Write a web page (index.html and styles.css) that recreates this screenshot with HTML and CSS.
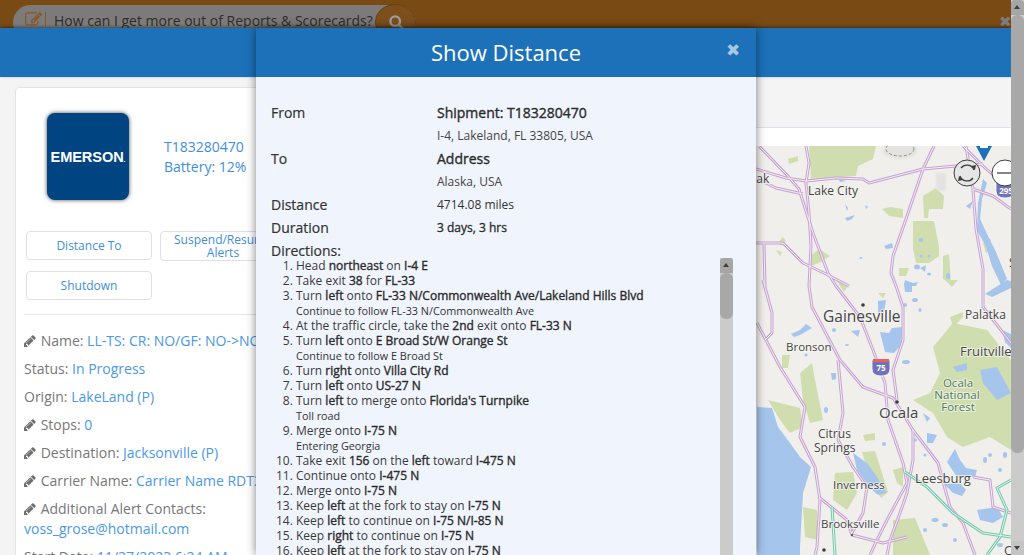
FILE: index.html
```html
<!DOCTYPE html>
<html lang="en">
<head>
<meta charset="utf-8">
<title>Show Distance</title>
<link rel="stylesheet" href="styles.css">
</head>
<body>
<svg class="sprite" width="0" height="0" aria-hidden="true">
  <symbol id="pencil" viewBox="0 0 1792 1792"><path d="M491 1536l91-91-235-235-91 91v107h128v128h107zm372-928q0-22-22-22-10 0-17 7l-542 542q-7 7-7 17 0 22 22 22 10 0 17-7l542-542q7-7 7-17zm-54-192l416 416-832 832h-416v-416zm683 96q0 53-37 90l-166 166-416-416 166-165q36-38 90-38 53 0 91 38l235 234q37 39 37 91z"/></symbol>
</svg>
<div class="window">
  <div class="page">
    <div class="topbar">
      <div class="search">
        <svg class="search-edit" viewBox="0 0 1792 1792"><path d="M888 1184l116-116-152-152-116 116v56h96v96h56zm440-720q-16-16-33 1l-350 350q-17 17-1 33t33-1l350-350q17-17 1-33zm80 594v190q0 119-84.5 203.5t-203.5 84.5h-832q-119 0-203.5-84.5t-84.5-203.5v-832q0-119 84.5-203.5t203.5-84.5h832q63 0 117 25 15 7 18 23 3 17-9 29l-49 49q-14 14-32 8-23-6-45-6h-832q-66 0-113 47t-47 113v832q0 66 47 113t113 47h832q66 0 113-47t47-113v-126q0-13 9-22l64-64q15-15 35-7t20 29zm-96-738l288 288-672 672h-288v-288zm444 132l-92 92-288-288 92-92q28-28 68-28t68 28l152 152q28 28 28 68t-28 68z"/></svg>
        <span class="search-sep"></span>
        <span class="search-text">How can I get more out of Reports &amp; Scorecards?</span>
        <span class="search-btn">
          <svg viewBox="0 0 20 20"><circle cx="9" cy="9" r="6" /><path d="M13.5 13.5 L19 19"/></svg>
        </span>
      </div>
      <span class="top-close">✖</span>
    </div>
    <div class="header"></div>
    <div class="content">
      <section class="card">
        <div class="identity">
          <div class="logo"><span>EMERSON<small>.</small></span></div>
          <div class="identity-text">
            <div>T183280470</div>
            <div>Battery: 12%</div>
          </div>
        </div>
        <div class="actions">
          <a class="action">Distance To</a>
          <a class="action action-tall">Suspend/Resume Alerts</a>
          <a class="action">Shutdown</a>
        </div>
        <hr class="rule">
        <div class="field"><svg class="pen"><use href="#pencil"/></svg> Name: <a>LL-TS: CR: NO/GF: NO-&gt;NO</a></div>
        <div class="field">Status: <a>In Progress</a></div>
        <div class="field">Origin: <a>LakeLand (P)</a></div>
        <div class="field"><svg class="pen"><use href="#pencil"/></svg> Stops: <a>0</a></div>
        <div class="field"><svg class="pen"><use href="#pencil"/></svg> Destination: <a>Jacksonville (P)</a></div>
        <div class="field"><svg class="pen"><use href="#pencil"/></svg> Carrier Name: <a>Carrier Name RDT3</a></div>
        <div class="field field-double"><svg class="pen"><use href="#pencil"/></svg> Additional Alert Contacts:<br><a>voss_grose@hotmail.com</a></div>
        <div class="field">Start Date: <a>11/27/2023 6:24 AM</a></div>
      </section>
      <section class="panel">
        <svg class="map" viewBox="756 146 255 409" xmlns="http://www.w3.org/2000/svg">
          <defs>
            <g id="roads">
              <path d="M756 169L786 178L806 181L836 178L863 179L869 183L896 176L923 169L956 166L983 164"/>
              <path d="M759 146L786 174L799 189L813 233L828 273L836 286L860 317L873 350L885 383L888 420L903 463L907 483L887 520L877 540L870 555"/>
              <path d="M806 146L809 163L806 183L809 213L811 246L809 286L812 307L840 360L863 387L893 398L913 430L938 463L950 507L963 523L975 555"/>
              <path d="M934 146L923 169L906 219L893 256L891 273L896 286L903 307L903 340L893 370L897 400"/>
              <path d="M757 323L780 367L805 407L800 437L815 467L820 500L817 547L815 555"/>
              <path d="M763 280L772 313L772 333L765 340"/>
              <path d="M756 243L783 243L803 263L826 274L849 286"/>
              <path d="M764 243L765 286"/>
              <path d="M756 178L776 188L803 194"/>
              <path d="M966 146L973 189L976 229L983 269L983 307L1011 343"/>
              <path d="M973 189L993 196L1011 209"/>
              <path d="M963 146L983 166L1011 191"/>
              <path d="M838 360L843 413L838 440L853 467L867 487L863 513L852 533"/>
              <path d="M913 430L913 460L907 493L900 513L890 540L887 555"/>
              <path d="M820 498L847 520L852 535L883 543L907 537"/>
              <path d="M973 477L990 480L993 507L1011 513"/>
            </g>
            <g id="tolls">
              <path d="M905 472L927 487L953 513L983 533L1011 537"/>
              <path d="M1011 480L997 488L1007 510L1000 537L987 555"/>
              <path d="M832 507L835 555"/>
            </g>
          </defs>
          <rect class="land" x="756" y="146" width="255" height="409"/>
          <g class="green">
            <polygon points="809,146 876,146 873,159 858,166 856,176 811,179"/>
            <polygon points="882,209 890,207 903,209 903,218 889,216"/>
            <polygon points="923,196 936,188 944,196 943,209 929,209 928,218 924,218"/>
            <polygon points="913,221 934,221 939,246 939,256 929,263 916,263 913,249"/>
            <polygon points="943,256 949,254 951,283 943,279"/>
            <polygon points="899,268 909,268 906,276 899,276"/>
            <polygon points="788,159 798,156 798,161 789,164"/>
            <polygon points="812,255 819,249 830,256 819,263 811,266"/>
            <polygon points="983,243 991,239 991,249 986,253"/>
            <polygon points="933,347 953,323 987,330 1011,360 1011,450 990,437 963,447 947,437 933,413 913,400 930,393 940,373"/>
            <polygon points="800,373 812,363 815,380 823,420 810,423 803,400"/>
            <polygon points="768,400 800,408 803,427 790,433 780,420"/>
            <polygon points="835,473 853,472 857,493 847,510 833,500"/>
            <polygon points="803,507 817,510 818,540 805,537"/>
            <polygon points="893,470 903,467 903,487 897,483"/>
            <polygon points="862,452 875,451 888,492 881,498 870,478"/>
            <polygon points="863,435 875,433 875,440 865,441"/>
            <polygon points="782,355 790,355 788,368 782,368"/>
            <polygon points="893,520 915,518 930,555 893,555"/>
            <polygon points="950,317 963,312 963,317 953,327"/>
            <polygon points="945,280 958,280 952,287"/>
            <polygon points="836,280 848,286 844,292"/>
            <polygon points="878,293 886,293 883,298"/>
            <polygon points="778,243 783,237 786,241 781,246"/>
            <polygon points="776,250 782,252 780,256"/>
          </g>
          <g class="haze">
            <ellipse cx="900" cy="151" rx="17" ry="8"/>
            <rect x="936" y="173" width="10" height="18" rx="3"/>
          </g>
          <ellipse class="dashes" cx="900" cy="149" rx="14" ry="7"/>
          <g class="water">
            <polygon points="757,407 772,408 778,427 790,443 800,457 811,467 803,493 800,547 800,555 757,555"/>
            <polygon points="983,179 987,183 982,199 980,219 988,236 996,252 1007,279 1001,285 992,266 986,247 977,230 978,203"/>
            <polygon points="985,294 1007,280 1011,281 1011,288 992,297"/>
            <polygon points="1002,330 1011,334 1011,348 1005,342"/>
            <polygon points="880,332 889,333 892,328 903,327 901,345 894,353 885,352"/>
            <polygon points="878,301 886,300 884,312 878,313"/>
            <polygon points="904,283 912,283 912,292 905,292"/>
            <polygon points="980,370 997,367 1011,393 997,400 983,383"/>
            <polygon points="953,367 967,363 967,370 957,372"/>
            <polygon points="853,453 860,458 868,464 877,477 887,493 878,495 870,488 857,470"/>
            <polygon points="927,433 937,435 933,443 927,443"/>
            <polygon points="944,484 960,483 966,490 962,496 953,493"/>
            <polygon points="947,462 955,449 960,460 966,468 977,470 975,477 957,477"/>
            <polygon points="977,510 997,507 1003,517 993,523 980,520"/>
            <polygon points="851,331 860,330 858,337"/>
            <polygon points="831,373 836,373 836,379 832,380"/>
            <polygon points="791,334 800,330 806,324 812,328 800,335 794,337"/>
            <polygon points="923,413 930,418 927,422"/>
            <polygon points="845,218 855,215 852,219 847,221"/>
            <polygon points="845,204 848,208 847,211"/>
            <polygon points="865,205 868,207 866,209"/>
            <polygon points="884,246 892,243 893,248 886,249"/>
            <polygon points="966,206 973,201 970,209"/>
            <polygon points="905,280 913,283 918,282 916,286 904,286"/>
            <polygon points="920,268 926,265 925,272"/>
            <polygon points="838,178 846,181 840,182"/>
            <ellipse cx="921" cy="240" rx="2.5" ry="2"/>
            <ellipse cx="921" cy="256" rx="1.5" ry="1.5"/>
            <ellipse cx="929" cy="256" rx="1.5" ry="1.5"/>
            <ellipse cx="917" cy="267" rx="3" ry="2.5"/>
            <ellipse cx="929" cy="274" rx="2" ry="1.5"/>
            <ellipse cx="948" cy="276" rx="2" ry="3"/>
            <ellipse cx="861" cy="258" rx="1.5" ry="1"/>
            <ellipse cx="905" cy="305" rx="2" ry="2"/>
            <ellipse cx="915" cy="300" rx="3" ry="2"/>
            <ellipse cx="920" cy="310" rx="1.5" ry="2"/>
            <ellipse cx="906" cy="362" rx="4" ry="2"/>
            <ellipse cx="834" cy="330" rx="2" ry="2"/>
            <ellipse cx="847" cy="345" rx="2" ry="1"/>
            <ellipse cx="806" cy="355" rx="1.5" ry="1.5"/>
            <ellipse cx="826" cy="410" rx="2" ry="3"/>
            <ellipse cx="884" cy="444" rx="2" ry="2"/>
            <ellipse cx="915" cy="440" rx="2" ry="1.5"/>
            <ellipse cx="925" cy="455" rx="1.5" ry="1.5"/>
            <ellipse cx="935" cy="520" rx="3.5" ry="2"/>
            <ellipse cx="945" cy="525" rx="3" ry="2"/>
            <ellipse cx="925" cy="530" rx="2" ry="2"/>
            <ellipse cx="990" cy="455" rx="2" ry="2"/>
            <ellipse cx="1005" cy="455" rx="2" ry="3"/>
            <ellipse cx="985" cy="460" rx="2" ry="3"/>
            <ellipse cx="1000" cy="470" rx="2" ry="2"/>
            <ellipse cx="1000" cy="545" rx="3" ry="2"/>
            <ellipse cx="955" cy="540" rx="2" ry="2"/>
          </g>
          <g class="road-case"><use href="#roads"/></g>
          <g class="road-core"><use href="#roads"/></g>
          <g class="toll-case"><use href="#tolls"/></g>
          <g class="toll-core"><use href="#tolls"/></g>
          <circle class="dot" cx="863" cy="305" r="1.8"/>
          <circle class="dot" cx="897" cy="402" r="1.8"/>
          <circle class="dot" cx="824" cy="550" r="1.8"/>
          <circle class="dot" cx="852" cy="535" r="1"/>

          <g class="shield">
            <path class="shield-body" d="M872 360H890V369Q890 376 881 376Q872 376 872 369Z"/>
            <rect class="shield-top" x="873" y="359" width="16" height="3"/>
            <text class="shield-text" x="881" y="371">75</text>
            <path class="shield-body" d="M996 182H1014V191Q1014 198 1005 198Q996 198 996 191Z"/>
            <text class="shield-text" x="1006" y="194">295</text>
          </g>

          <text class="lbl" x="747" y="183">Oak</text>
          <text class="lbl" x="808" y="195">Lake City</text>
          <text class="lbl lbl-big" x="823" y="322">Gainesville</text>
          <text class="lbl" x="965" y="319">Palatka</text>
          <text class="lbl lbl-mid" x="960" y="356">Fruitville</text>
          <text class="lbl lbl-sm" x="786" y="351">Bronson</text>
          <text class="lbl lbl-big2" x="879" y="418">Ocala</text>
          <text class="lbl lbl-forest" y="387"><tspan x="958">Ocala</tspan><tspan x="957" dy="12">National</tspan><tspan x="958" dy="12">Forest</tspan></text>
          <text class="lbl" y="438"><tspan x="818">Citrus</tspan><tspan x="814" dy="14">Springs</tspan></text>
          <text class="lbl lbl-sm" x="833" y="489">Inverness</text>
          <text class="lbl lbl-mid" x="915" y="483">Leesburg</text>
          <text class="lbl lbl-sm" x="821" y="528">Brooksville</text>
          <text class="lbl lbl-mid" x="1004" y="555">Orlando</text>
          <text class="lbl" x="1009" y="267">St</text>

          <path class="pin" d="M976 146H992L984 161Z"/>
          <rect class="pin-mark" x="980" y="146" width="8" height="2"/>
          <g class="ctl">
            <circle cx="967" cy="173" r="13"/>
            <path class="ctl-arrow" d="M974 170A7.5 7.5 0 0 0 961 168M960 176A7.5 7.5 0 0 0 973 178"/>
            <path class="ctl-head" d="M971 166L975 170L976 165ZM963 180L959 176L958 181Z"/>
            <circle class="ctl-white" cx="1005" cy="173" r="13"/>
            <path class="ctl-minus" d="M997 173H1011"/>
          </g>
        </svg>
      </section>
    </div>
  </div>
  <div class="scrollbar scrollbar-page">
    <span class="scroll-btn scroll-up"></span>
    <span class="scroll-thumb"></span>
    <span class="scroll-rest"></span>
    <span class="scroll-btn scroll-down"></span>
  </div>

  <div class="modal">
    <div class="modal-head">
      <h1>Show Distance</h1>
      <span class="modal-close">✖</span>
    </div>
    <div class="modal-body">
      <div class="kv kv-main"><span class="k">From</span><span class="v">Shipment: T183280470</span></div>
      <div class="kv kv-sub"><span class="k"></span><span class="v">I-4, Lakeland, FL 33805, USA</span></div>
      <div class="kv kv-main"><span class="k">To</span><span class="v">Address</span></div>
      <div class="kv kv-sub"><span class="k"></span><span class="v">Alaska, USA</span></div>
      <div class="kv kv-tight"><span class="k">Distance</span><span class="v v-small">4714.08 miles</span></div>
      <div class="kv kv-tight"><span class="k">Duration</span><span class="v v-small v-dark">3 days, 3 hrs</span></div>
      <div class="dir-title">Directions:</div>
      <div class="dir-wrap">
        <ol class="steps">
          <li>Head <b>northeast</b> on <b>I-4 E</b></li>
          <li>Take exit <b>38</b> for <b>FL-33</b></li>
          <li>Turn <b>left</b> onto <b>FL-33 N/Commonwealth Ave/Lakeland Hills Blvd</b><div class="note">Continue to follow FL-33 N/Commonwealth Ave</div></li>
          <li>At the traffic circle, take the <b>2nd</b> exit onto <b>FL-33 N</b></li>
          <li>Turn <b>left</b> onto <b>E Broad St/W Orange St</b><div class="note">Continue to follow E Broad St</div></li>
          <li>Turn <b>right</b> onto <b>Villa City Rd</b></li>
          <li>Turn <b>left</b> onto <b>US-27 N</b></li>
          <li>Turn <b>left</b> to merge onto <b>Florida's Turnpike</b><div class="note">Toll road</div></li>
          <li>Merge onto <b>I-75 N</b><div class="note">Entering Georgia</div></li>
          <li>Take exit <b>156</b> on the <b>left</b> toward <b>I-475 N</b></li>
          <li>Continue onto <b>I-475 N</b></li>
          <li>Merge onto <b>I-75 N</b></li>
          <li>Keep <b>left</b> at the fork to stay on <b>I-75 N</b></li>
          <li>Keep <b>left</b> to continue on <b>I-75 N/I-85 N</b></li>
          <li>Keep <b>right</b> to continue on <b>I-75 N</b></li>
          <li>Keep <b>left</b> at the fork to stay on <b>I-75 N</b></li>
        </ol>
        <div class="scrollbar scrollbar-modal">
          <span class="scroll-btn scroll-up"></span>
          <span class="scroll-thumb"></span>
          <span class="scroll-rest"></span>
        </div>
      </div>
    </div>
  </div>
</div>
</body>
</html>
```
FILE: styles.css
```css
* { box-sizing: border-box; }
html, body { margin: 0; padding: 0; height: 100%; overflow: hidden; }
body { font-family: "Open Sans", "Liberation Sans", sans-serif; font-size: 14px; color: #333; background: #f4f4f4; }
.sprite { position: absolute; }
a { color: #4a98e6; text-decoration: none; }

.window { position: relative; display: flex; width: 1024px; height: 555px; overflow: hidden; }
.page { flex: 0 0 1011px; width: 1011px; height: 555px; overflow: hidden; display: flex; flex-direction: column; }

/* Dimmed top bar */
.topbar { flex: 0 0 28px; background: #7a4a14; position: relative; overflow: hidden; padding: 5px 0 0 13px; display: flex; justify-content: space-between; }
.search { display: flex; align-items: center; width: 403px; height: 35px; background: #7d7b79; border-radius: 18px; padding-left: 12px; position: relative; }
.search-edit { width: 17px; height: 17px; fill: #8a562a; flex: none; margin-top: -7px; }
.search-sep { width: 1px; height: 14px; background: #8a562a; margin: -7px 0 0 3px; flex: none; }
.search-text { margin: -4px 0 0 8px; font-size: 14px; color: #2c2c2c; white-space: nowrap; }
.search-btn { position: absolute; right: 0; top: -1px; width: 41px; height: 36px; border-radius: 50%; background: #7d4f1c; border: 1px solid #6d4213; display: flex; justify-content: center; padding-top: 9px; }
.search-btn svg { width: 16px; height: 16px; fill: none; stroke: #a09c96; stroke-width: 3; }
.top-close { font-size: 15px; color: #7d7d7d; position: absolute; right: -3px; top: 12px; line-height: 18px; width: 15px; overflow: hidden; }

.header { flex: 0 0 49px; background: #1c71b9; position: relative; box-shadow: 0 -1px 3px rgba(0,0,0,.45); }
.content { flex: 1; display: flex; gap: 6px; padding: 10px 0 0 15px; min-height: 0; overflow: hidden; }

/* Left card */
.card { flex: 0 0 275px; background: #fff; border: 1px solid #e2e2ea; border-radius: 4px; padding: 25px 8px 0; overflow: hidden; height: 520px; }
.identity { display: flex; align-items: center; padding-left: 23px; }
.logo { width: 82px; height: 87px; background: #004481; border-radius: 8px; box-shadow: 0 0 4px rgba(0,0,0,.7); display: flex; align-items: center; justify-content: center; color: #fff; flex: none; }
.logo span { font-family: "Liberation Sans", Arial, sans-serif; font-size: 14.6px; font-weight: 700; letter-spacing: -.1px; }
.logo small { font-size: 7px; }
.identity-text { margin-left: 35px; color: #3f8ede; line-height: 20px; font-size: 14px; }
.actions { display: grid; grid-template-columns: 126px 126px; gap: 10px 8px; margin: 31px 0 0 2px; align-items: start; }
.action { height: 29px; border: 1px solid #dfdfe8; border-radius: 4px; color: #3f8ede; font-size: 12px; line-height: 13px; display: flex; align-items: center; justify-content: center; text-align: center; background: #fff; }
.action-tall { height: 30px; }
.rule { margin: 14px 0 14px; border: 0; border-top: 1px solid #e6e6e6; }
.field { height: 28px; line-height: 24px; font-size: 14px; color: #777; white-space: nowrap; overflow: hidden; }
.field-double { height: 48px; line-height: 20px; padding-top: 2px; }
.pen { width: 14px; height: 14px; fill: #6f6f6f; vertical-align: -2px; margin: 0 -.5px 0 -.5px; }

/* Right panel + map */
.panel { flex: 1; margin-top: 40px; background: #fff; border-top: 1px solid #e0e0ea; padding-top: 18px; display: flex; flex-direction: column; align-items: flex-end; min-width: 0; }
.map { width: 255px; height: 409px; flex: none; display: block; }
.land { fill: #f0efeb; }
.green { filter: blur(.7px); }
.green polygon { fill: #d0ddaf; }
.water { filter: blur(.6px); }
.water polygon, .water ellipse { fill: #a6c5ec; }
.haze { fill: #e4e3df; filter: blur(1px); }
.dashes { fill: none; stroke: #8f8f8a; stroke-width: 1; stroke-dasharray: 3 2; }
.road-case { fill: none; stroke: #c7a3d2; stroke-width: 3; stroke-linejoin: round; }
.road-core { fill: none; stroke: #f3eef3; stroke-width: 1; stroke-linejoin: round; }
.toll-case { fill: none; stroke: #74c9ae; stroke-width: 3; stroke-linejoin: round; }
.toll-core { fill: none; stroke: #e6f5ef; stroke-width: 1; stroke-linejoin: round; }
.dot { fill: #3c3c3c; }
.shield-body { fill: #6f74b8; stroke: #fff; stroke-width: .8; }
.shield-top { fill: #ee5f5f; }
.shield-text { fill: #fff; font-size: 8px; font-weight: 700; text-anchor: middle; }
.lbl { font-family: "Open Sans", sans-serif; font-size: 12px; fill: #45454a; paint-order: stroke; stroke: rgba(245,245,240,.75); stroke-width: 2px; }
.lbl-sm { font-size: 11.5px; }
.lbl-mid { font-size: 13px; }
.lbl-big { font-size: 15.5px; }
.lbl-big2 { font-size: 15px; }
.lbl-forest { fill: #4f7a56; text-anchor: middle; font-size: 11.5px; }
.pin { fill: #1c71b9; }
.pin-mark { fill: #fff; }
.ctl circle { fill: #e6e6e6; stroke: #3d3d3d; stroke-width: 1; }
.ctl .ctl-white { fill: #fff; }
.ctl-arrow { fill: none; stroke: #3d3d3d; stroke-width: 1.3; }
.ctl-head { fill: #3d3d3d; }
.ctl-minus { stroke: #666; stroke-width: 1.6; }

/* Scrollbars */
.scrollbar { display: flex; flex-direction: column; width: 13px; flex: none; background: #cbcbcb; }
.scroll-btn { flex: 0 0 15px; background: #a6a6a6; position: relative; }
.scroll-up { border-radius: 4px 4px 0 0; }
.scroll-up::after, .scroll-down::after { content: ""; position: absolute; left: 3px; border-left: 3.5px solid transparent; border-right: 3.5px solid transparent; }
.scroll-up::after { top: 5px; border-bottom: 4px solid #3f3f3f; }
.scroll-down { background: #c4c4c4; flex-basis: 14px; }
.scroll-down::after { top: 5px; border-top: 4px solid #3f3f3f; }
.scroll-thumb { background: #a8a8a8; border-radius: 6px; }
.scroll-rest { flex: 1; }
.scrollbar-page { height: 555px; }
.scrollbar-page .scroll-thumb { flex: 0 0 438px; }
.scrollbar-modal { position: absolute; right: 23px; top: 0; bottom: 0; }
.scrollbar-modal .scroll-thumb { flex: 0 0 46px; }

/* Modal */
.modal { position: absolute; left: 256px; top: 28px; width: 500px; height: 527px; background: #f0f4fc; box-shadow: 0 0 9px rgba(0,0,0,.5); display: flex; flex-direction: column; overflow: hidden; }
.modal-head { flex: 0 0 49px; background: #1c71b9; position: relative; display: flex; align-items: center; justify-content: center; }
.modal-head h1 { margin: 0; font-size: 22px; font-weight: 400; color: #fff; line-height: 49px; }
.modal-close { position: absolute; right: 16px; top: 12px; font-size: 17px; line-height: 20px; color: #a9c6e4; }
.modal-body { flex: 1; padding: 25px 0 0 15px; color: #333; min-height: 0; }
.kv { display: flex; }
.k { flex: 0 0 166px; font-size: 14px; -webkit-text-stroke: .2px #333; }
.v { font-size: 14px; }
.kv-main { height: 23px; line-height: 22px; }
.kv-main .v { -webkit-text-stroke: .35px #222; }
.kv-sub { height: 23px; line-height: 22px; }
.kv-sub .v { font-size: 12px; color: #444; }
.kv-tight { height: 23px; line-height: 21px; }
.v-small { font-size: 12px; color: #333; line-height: 21px; }
.v-dark { -webkit-text-stroke: .3px #222; }
.dir-title { font-size: 14px; line-height: 20px; height: 18px; margin-top: 1px; -webkit-text-stroke: .2px #333; }
.dir-wrap { position: relative; height: 300px; overflow: hidden; margin-top: -1px; }
.steps { margin: 0; padding: 0 0 0 25px; font-size: 12px; line-height: 15px; color: #3a3a3a; }
.steps b { font-weight: 400; color: #2b2b2b; -webkit-text-stroke: .35px #2b2b2b; }
.note { font-size: 10.8px; line-height: 15px; color: #333; }
```
